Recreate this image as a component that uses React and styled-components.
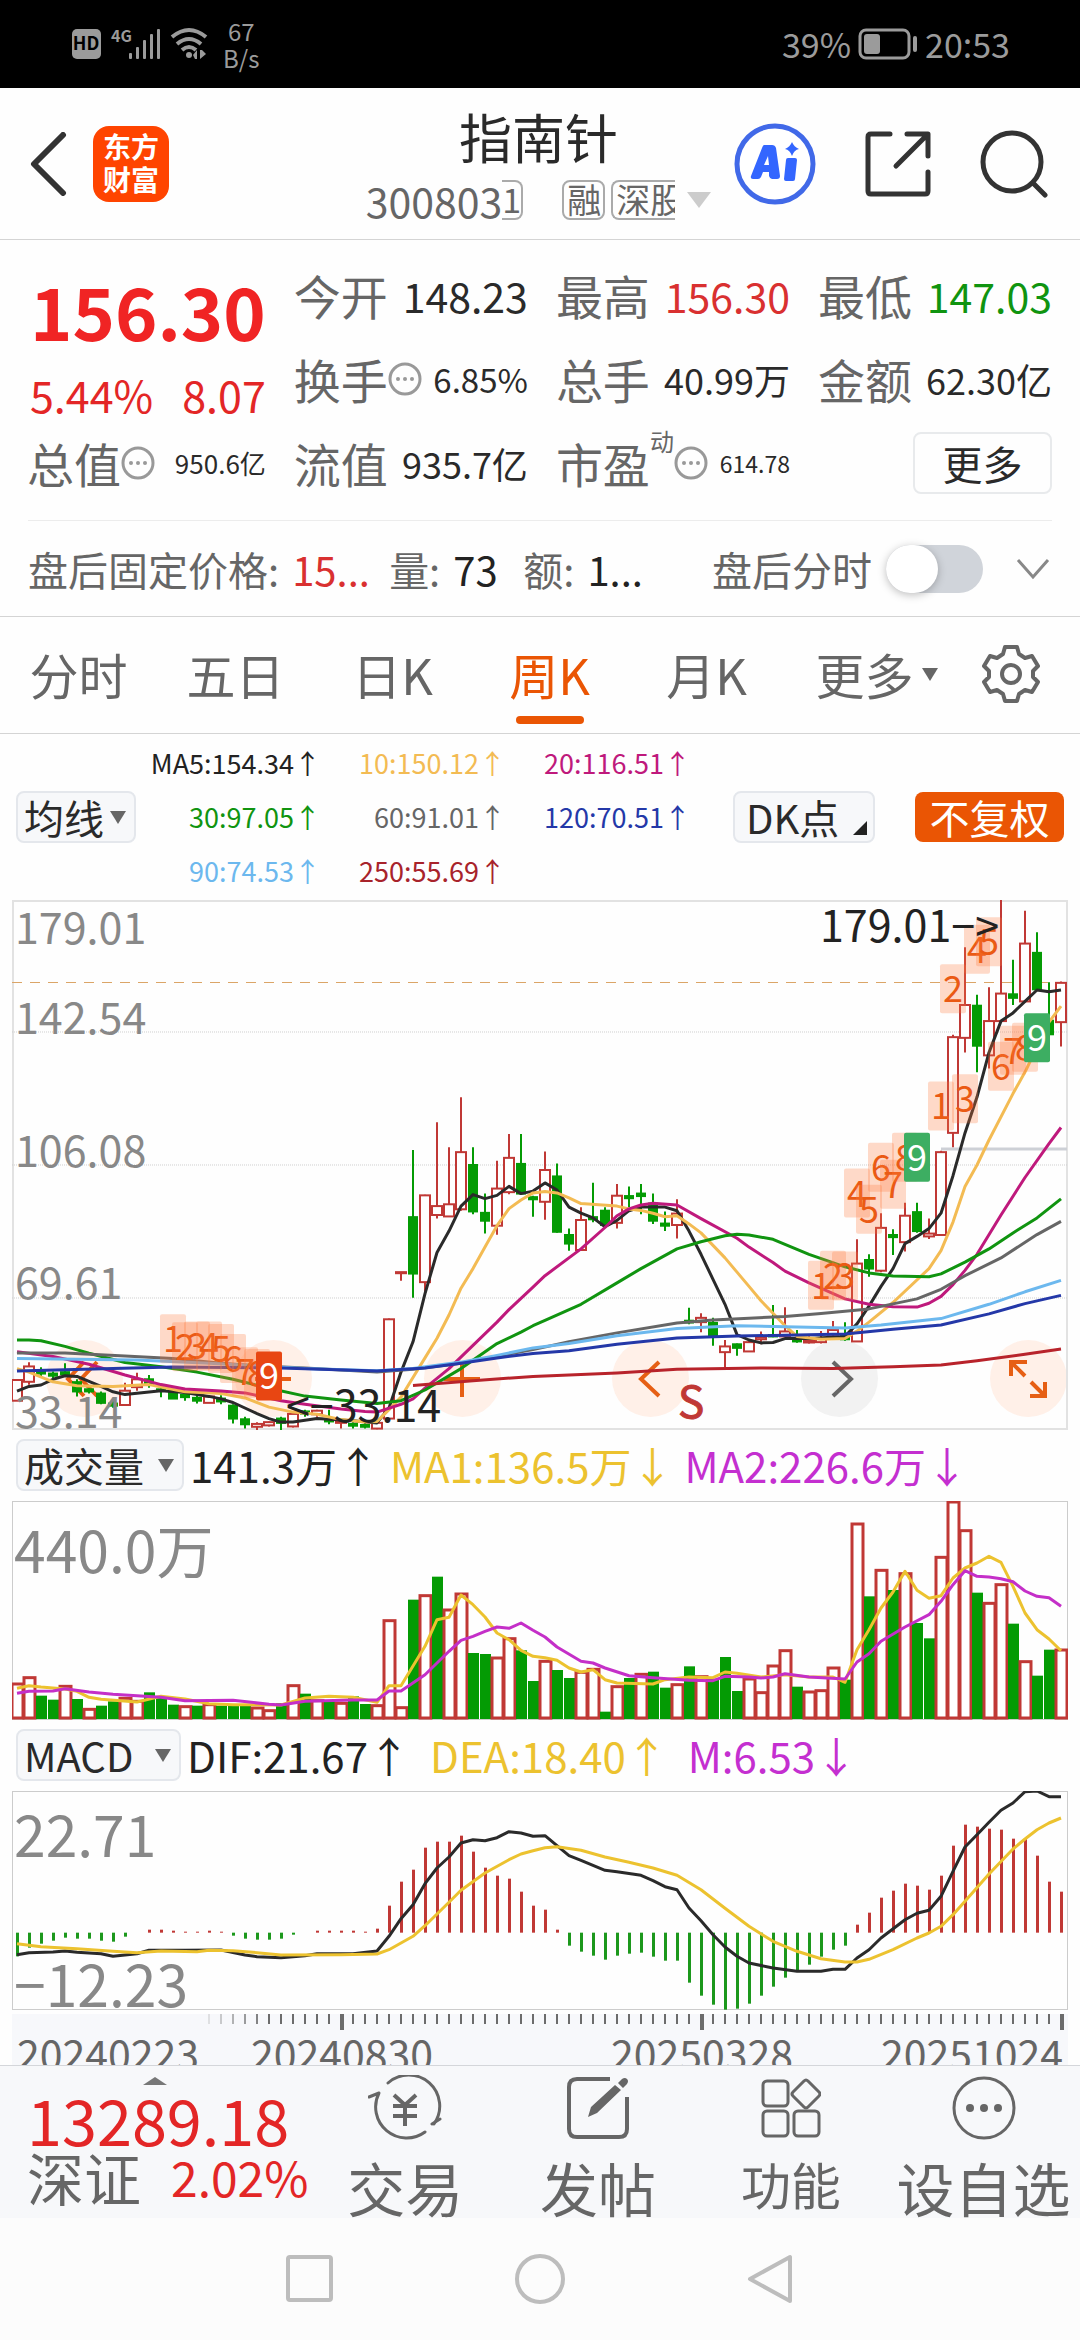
import React, { useState } from "react";
import styled, { createGlobalStyle } from "styled-components";

const GlobalStyle = createGlobalStyle`
  * {
    box-sizing: border-box;
  }
  body {
    margin: 0;
    background: #fcfcfc;
    font-family: "Noto Sans CJK SC", "Noto Sans", sans-serif;
    color: #2a2a2a;
  }
  button,
  select {
    font: inherit;
    color: inherit;
    background: none;
    border: 0;
    padding: 0;
    margin: 0;
    appearance: none;
    white-space: nowrap;
  }
`;

const Page = styled.div`
  background: #fefefe;
  overflow: hidden;
`;

/* ---------- status bar ---------- */

const StatusBar = styled.div`
  display: flex;
  align-items: center;
  justify-content: space-between;
  height: 88px;
  padding: 0 70px;
  background: #000;
  color: #9b9b9b;
  font-size: 34px;
  line-height: 40px;
`;

const StatusGroup = styled.div`
  display: flex;
  align-items: center;
  gap: 7px;
`;

const Speed = styled.div`
  margin-left: 6px;
  text-align: center;
  font-size: 24px;
  line-height: 27px;
`;

/* ---------- header ---------- */

const Header = styled.header`
  display: grid;
  grid-template-columns: 1fr auto 1fr;
  align-items: center;
  height: 152px;
  padding: 0 32px 0 29px;
  border-bottom: 1px solid #d4d4d4;
`;

const HeaderSide = styled.div`
  display: flex;
  align-items: center;
  justify-content: ${(p) => (p.$end ? "flex-end" : "flex-start")};
  gap: ${(p) => (p.$end ? "49px" : "26px")};
  button {
    display: flex;
  }
`;

const Logo = styled.div`
  width: 76px;
  height: 76px;
  padding-top: 4px;
  border-radius: 16px;
  background: #ff4400;
  color: #fff;
  font-size: 28px;
  font-weight: 700;
  line-height: 33px;
  text-align: center;
`;

const Title = styled.h1`
  margin: 0;
  padding-top: 6px;
  font-size: 53px;
  font-weight: 400;
  line-height: 64px;
  text-align: center;
`;

const SubTitle = styled.div`
  display: flex;
  align-items: center;
  height: 62px;
  padding-top: 3px;
  color: #666;
  font-size: 41px;
  line-height: 50px;
`;

const Tag = styled.span`
  height: 40px;
  overflow: hidden;
  border: 2px solid #aaa;
  width: ${(p) => p.$width}px;
  margin-left: ${(p) => p.$gap || 0}px;
  border-width: ${(p) => (p.$cut === "left" ? "2px 2px 2px 0" : p.$cut === "right" ? "2px 0 2px 2px" : "2px")};
  border-radius: ${(p) => (p.$cut === "left" ? "0 8px 8px 0" : p.$cut === "right" ? "8px 0 0 8px" : "8px")};
  padding-left: ${(p) => (p.$cut === "left" ? 0 : 3)}px;
  font-size: 34px;
  line-height: 34px;
  white-space: nowrap;
`;

const Caret = styled.span`
  flex: none;
  width: 0;
  height: 0;
  border: solid transparent;
  border-width: ${(p) => p.$h || 13}px ${(p) => p.$w || 8}px 0;
  border-top-color: ${(p) => p.$color || "#666"};
  margin-left: ${(p) => p.$gap || 0}px;
  pointer-events: none;
`;

/* ---------- quote ---------- */

const Quote = styled.section`
  display: grid;
  grid-template-columns: repeat(4, 1fr);
  grid-auto-rows: 84px;
  column-gap: 31px;
  margin: 0 28px;
  padding: 13px 0 15px 2px;
  border-bottom: 1px solid #ececec;
`;

const PriceBlock = styled.div`
  grid-row: span 2;
  color: #e32626;
`;

const Price = styled.div`
  color: #f02424;
  font-size: 72px;
  font-weight: 700;
  line-height: 114px;
  text-align: center;
`;

const Change = styled.div`
  display: flex;
  justify-content: space-between;
  font-size: 43px;
  line-height: 54px;
`;

const Stat = styled.div`
  display: flex;
  align-items: center;
  white-space: nowrap;
`;

const StatLabel = styled.span`
  margin-left: -3px;
  color: #666;
  font-size: 47px;
  line-height: 60px;
`;

const StatSup = styled.sup`
  align-self: flex-start;
  padding-top: 6px;
  color: #666;
  font-size: 24px;
  line-height: 28px;
`;

const StatValue = styled.span`
  margin-left: auto;
  color: ${(p) => p.$color || "#2a2a2a"};
  font-size: ${(p) => p.$size || 41}px;
  line-height: 60px;
`;

const MoreButton = styled.button`
  justify-self: end;
  align-self: center;
  width: 139px;
  height: 62px;
  border: 2px solid #e8eaec;
  border-radius: 8px;
  font-size: 40px;
  line-height: 56px;
`;

const AfterHours = styled.section`
  display: flex;
  align-items: center;
  height: 96px;
  padding: 0 28px;
  border-bottom: 1px solid #d4d4d4;
  color: #666;
  font-size: 40px;
  line-height: 60px;
  white-space: nowrap;
`;

const AfterValue = styled.span`
  width: ${(p) => p.$width}px;
  margin-left: 13px;
  color: ${(p) => p.$color || "#222"};
`;

const SwitchLabel = styled.label`
  display: flex;
  align-items: center;
  margin-left: auto;
  gap: 14px;
`;

const Switch = styled.input`
  appearance: none;
  display: flex;
  align-items: center;
  width: 97px;
  height: 48px;
  margin: 0;
  border-radius: 24px;
  background: #d0d4da;
  &::before {
    content: "";
    width: 52px;
    height: 48px;
    border-radius: 26px;
    background: #fff;
    box-shadow: 0 2px 8px rgba(0, 0, 0, 0.25);
  }
  &:checked {
    justify-content: flex-end;
    background: #ea5504;
  }
`;

const Expand = styled.button`
  display: flex;
  margin: 0 2px 0 33px;
`;

/* ---------- tabs ---------- */

const Tabs = styled.nav`
  display: grid;
  grid-template-columns: repeat(6, 1fr) 138px;
  height: 117px;
  border-bottom: 1px solid #d4d4d4;
`;

const Tab = styled.button`
  display: flex;
  align-items: center;
  justify-content: center;
  position: relative;
  padding: 0 0 2px ${(p) => (p.$menu ? 26 : 0)}px;
  color: ${(p) => (p.$active ? "#ea5504" : "#666")};
  font-size: 49px;
  line-height: 60px;
  &::after {
    content: "";
    display: ${(p) => (p.$active ? "block" : "none")};
    position: absolute;
    bottom: 9px;
    width: 68px;
    height: 8px;
    border-radius: 4px;
    background: #ea5504;
  }
`;

/* ---------- indicators ---------- */

const Indicators = styled.section`
  display: flex;
  align-items: center;
  height: 166px;
  padding: 0 16px;
`;

const Picker = styled.div`
  display: flex;
  align-items: center;
  width: ${(p) => p.$width}px;
  height: 52px;
  padding: 0 8px 0 6px;
  border: 2px solid #e4e7ec;
  border-radius: 8px;
  background: #f7f8fa;
  select {
    flex: 1;
    min-width: 0;
    height: 48px;
    font-size: 40px;
    line-height: 46px;
  }
`;

const MaGrid = styled.div`
  display: grid;
  grid-template-columns: repeat(3, 185px);
  grid-auto-rows: 54px;
  text-align: right;
  font-size: 27px;
  line-height: 54px;
  white-space: nowrap;
`;

const Colored = styled.span`
  color: ${(p) => p.$color};
`;

const DkButton = styled.button`
  display: flex;
  align-items: center;
  justify-content: space-between;
  width: 142px;
  height: 52px;
  margin: 0 40px 0 auto;
  padding: 0 6px 0 11px;
  border: 2px solid #e4e7ec;
  border-radius: 8px;
  background: #f7f8fa;
  font-size: 40px;
  line-height: 46px;
  &::after {
    content: "";
    align-self: flex-end;
    margin-bottom: 6px;
    border: 7px solid #222;
    border-top-color: transparent;
    border-left-color: transparent;
  }
`;

const AdjustButton = styled.button`
  width: 149px;
  height: 50px;
  border-radius: 8px;
  background: #ea5504;
  color: #fff;
  font-size: 40px;
  line-height: 48px;
`;

/* ---------- charts ---------- */

const ChartWrap = styled.div`
  position: relative;
  margin: 0 12px;
  > svg {
    display: block;
    position: relative;
    width: 100%;
    height: auto;
    pointer-events: none;
  }
`;

const ChartTools = styled.div`
  position: absolute;
  left: 34px;
  right: 1px;
  bottom: 13px;
  display: flex;
  justify-content: space-between;
`;

const Tool = styled.button`
  display: flex;
  align-items: center;
  justify-content: center;
  width: 77px;
  height: 77px;
  border-radius: 50%;
  background: ${(p) => (p.$off ? "#f2f2f2" : "#fff0e8")};
  svg {
    width: 46px;
    height: 46px;
  }
`;

const ChartHead = styled.div`
  display: flex;
  align-items: center;
  gap: ${(p) => p.$gap}px;
  height: 71px;
  padding: 0 0 1px 16px;
  font-size: 42px;
  line-height: 58px;
  white-space: nowrap;
  > :nth-child(2) {
    margin-left: ${(p) => 6 - p.$gap}px;
  }
`;

const AxisWrap = styled(ChartWrap)`
  margin-top: 4px;
  background: #f7f8fb;
`;

/* ---------- bottom bar ---------- */

const BottomBar = styled.footer`
  display: grid;
  grid-template-columns: 309px repeat(4, 1fr);
  height: 153px;
  overflow: hidden;
  border-top: 1px solid #d4d6da;
  background: #f7f8fa;
  color: #666;
`;

const IndexCard = styled.div`
  padding-left: 27px;
  white-space: nowrap;
`;

const IndexCaret = styled(Caret)`
  display: block;
  width: 24px;
  margin: 11px 0 0 116px;
  border-width: 0 12px 8px;
  border-bottom-color: #777;
`;

const IndexValue = styled.div`
  color: #e32626;
  font-size: 63px;
  line-height: 68px;
`;

const IndexRow = styled.div`
  display: flex;
  align-items: center;
  gap: 30px;
  font-size: 57px;
  line-height: 46px;
`;

const IndexChange = styled.span`
  color: #e32626;
  font-size: 48px;
`;

const Action = styled.button`
  display: flex;
  flex-direction: column;
  align-items: center;
  padding-top: 9px;
  font-size: ${(p) => p.$size || 58}px;
  line-height: ${(p) => (p.$size ? 68 : 76)}px;
  svg {
    flex: none;
    margin-bottom: 8px;
  }
`;

const NavBar = styled.div`
  display: flex;
  align-items: center;
  justify-content: center;
  gap: 178px;
  height: 122px;
  background: #fcfcfc;
`;

/* ---------- data ---------- */

// one row per week: [up, high, body top, body bottom, low]
const candles = [
  [1, 1370, 1372, 1430, 1430], [1, 1322, 1334, 1377, 1385], [0, 1336, 1346, 1354, 1365],
  [0, 1348, 1354, 1360, 1368], [0, 1325, 1350, 1356, 1362], [0, 1370, 1378, 1404, 1418],
  [0, 1395, 1398, 1404, 1410], [0, 1404, 1410, 1436, 1440], [0, 1425, 1438, 1444, 1450],
  [1, 1380, 1402, 1442, 1442], [1, 1352, 1370, 1392, 1402], [0, 1358, 1370, 1384, 1394],
  [0, 1385, 1398, 1402, 1420], [0, 1400, 1403, 1424, 1424], [0, 1408, 1414, 1420, 1430],
  [0, 1415, 1422, 1430, 1438], [1, 1415, 1418, 1436, 1436], [0, 1415, 1424, 1432, 1440],
  [0, 1440, 1444, 1480, 1494], [0, 1475, 1482, 1496, 1508], [1, 1490, 1495, 1503, 1512],
  [1, 1488, 1490, 1499, 1502], [0, 1475, 1480, 1492, 1512], [1, 1462, 1467, 1502, 1505],
  [0, 1455, 1460, 1466, 1475], [1, 1455, 1458, 1468, 1475], [0, 1455, 1482, 1488, 1496],
  [1, 1480, 1488, 1492, 1508], [0, 1490, 1495, 1500, 1508], [0, 1490, 1498, 1503, 1508],
  [1, 1490, 1492, 1508, 1510], [1, 1200, 1202, 1480, 1484], [1, 1070, 1070, 1073, 1094],
  [0, 728, 916, 1074, 1142], [1, 853, 855, 1098, 1125], [1, 650, 885, 910, 920],
  [1, 720, 880, 914, 914], [1, 580, 734, 894, 898], [0, 720, 770, 900, 908],
  [0, 850, 904, 926, 962], [1, 758, 836, 940, 965], [1, 683, 750, 846, 852],
  [0, 683, 767, 850, 852], [0, 856, 860, 866, 915], [1, 732, 784, 873, 923],
  [0, 766, 802, 957, 960], [0, 948, 966, 990, 1010], [1, 888, 924, 1008, 1008],
  [0, 820, 916, 922, 930], [0, 888, 898, 938, 945], [1, 823, 856, 932, 948],
  [0, 830, 857, 863, 888], [0, 823, 850, 857, 908], [0, 850, 878, 926, 935],
  [0, 900, 934, 940, 955], [1, 866, 906, 938, 976], [0, 1170, 1206, 1211, 1216],
  [1, 1185, 1198, 1210, 1238], [0, 1198, 1212, 1250, 1276], [1, 1260, 1278, 1294, 1336],
  [0, 1270, 1272, 1282, 1304], [1, 1262, 1266, 1292, 1292], [1, 1236, 1252, 1258, 1272],
  [0, 1162, 1246, 1250, 1252], [1, 1168, 1236, 1250, 1252], [0, 1232, 1258, 1264, 1268],
  [1, 1245, 1262, 1267, 1270], [1, 1235, 1256, 1266, 1270], [1, 1207, 1232, 1245, 1250],
  [0, 1210, 1245, 1258, 1262], [1, 978, 1046, 1264, 1264], [0, 1020, 1036, 1060, 1083],
  [1, 905, 946, 1066, 1070], [0, 950, 966, 972, 1022], [1, 876, 912, 986, 1012],
  [0, 876, 902, 955, 960], [1, 920, 962, 970, 977], [1, 730, 734, 966, 968],
  [1, 405, 412, 680, 720], [1, 160, 322, 414, 455], [0, 293, 324, 436, 510],
  [1, 272, 367, 463, 500], [1, 28, 290, 367, 370], [0, 195, 292, 302, 322],
  [1, 58, 150, 312, 314], [0, 118, 176, 278, 280], [0, 258, 366, 404, 406],
  [1, 256, 260, 370, 438],
];

const priceLines = [
  { color: "#2a2a2a", points: [[0, 1403], [1, 1390], [2, 1386], [3, 1370], [4, 1360], [5, 1362], [7, 1390], [8, 1405], [9, 1413], [12, 1402], [14, 1407], [16, 1418], [17, 1425], [18, 1435], [20, 1466], [21, 1480], [22, 1490], [23, 1490], [25, 1480], [28, 1486], [30, 1492], [31, 1450], [32, 1350], [33, 1265], [34, 1130], [35, 1015], [36, 955], [37, 885], [38, 853], [39, 864], [40, 855], [41, 830], [42, 850], [43, 843], [44, 820], [45, 840], [46, 888], [47, 905], [48, 918], [49, 943], [50, 925], [51, 898], [52, 888], [54, 888], [55, 898], [56, 955], [57, 1020], [58, 1090], [59, 1160], [60, 1245], [61, 1260], [62, 1268], [63, 1267], [64, 1256], [66, 1256], [69, 1250], [70, 1215], [71, 1165], [72, 1110], [73, 1060], [74, 990], [75, 970], [76, 948], [77, 905], [78, 800], [79, 680], [80, 580], [81, 455], [82, 367], [83, 344], [84, 312], [85, 280], [86, 285], [87, 280]] },
  { color: "#f3bb53", points: [[0, 1340], [1, 1350], [3, 1377], [5, 1388], [8, 1390], [11, 1385], [14, 1405], [17, 1410], [19, 1422], [21, 1448], [23, 1462], [25, 1468], [27, 1483], [29, 1490], [30, 1488], [31, 1455], [32, 1420], [33, 1365], [34, 1310], [35, 1255], [36, 1190], [37, 1115], [38, 1060], [39, 1000], [40, 940], [41, 892], [42, 868], [43, 848], [44, 844], [45, 848], [46, 862], [47, 878], [50, 885], [51, 893], [52, 897], [53, 905], [54, 915], [55, 912], [56, 935], [57, 960], [59, 1030], [60, 1070], [61, 1110], [62, 1150], [63, 1185], [64, 1220], [65, 1250], [67, 1258], [69, 1256], [70, 1235], [71, 1210], [73, 1155], [76, 1060], [77, 1010], [78, 930], [79, 830], [80, 770], [81, 700], [83, 570], [84, 510], [85, 440], [86, 370], [87, 325]] },
  { color: "#bf197c", points: [[0, 1293], [3, 1306], [6, 1328], [9, 1358], [12, 1385], [14, 1397], [17, 1403], [19, 1408], [22, 1430], [24, 1440], [27, 1453], [29, 1460], [30, 1462], [32, 1440], [33, 1425], [34, 1395], [36, 1340], [38, 1275], [40, 1210], [41, 1175], [43, 1112], [44, 1080], [47, 1005], [49, 945], [50, 912], [51, 893], [52, 882], [53, 877], [55, 882], [57, 920], [60, 975], [61, 1000], [63, 1043], [64, 1067], [66, 1100], [69, 1145], [71, 1160], [73, 1167], [75, 1168], [76, 1157], [77, 1138], [78, 1105], [79, 1065], [80, 1020], [82, 910], [84, 805], [86, 710], [87, 665]] },
  { color: "#109410", points: [[0, 1260], [1, 1260], [2, 1262], [4, 1278], [6, 1297], [9, 1323], [12, 1335], [15, 1350], [18, 1370], [21, 1395], [24, 1417], [27, 1428], [30, 1438], [32, 1430], [34, 1400], [37, 1340], [40, 1270], [42, 1238], [43, 1220], [44, 1205], [47, 1160], [50, 1100], [52, 1060], [55, 1005], [57, 985], [59, 968], [60, 964], [61, 966], [63, 978], [66, 1020], [69, 1055], [71, 1072], [73, 1081], [76, 1083], [77, 1075], [79, 1042], [81, 1005], [83, 960], [85, 918], [87, 865]] },
  { color: "#666666", points: [[0, 1296], [4, 1296], [9, 1305], [13, 1312], [17, 1325], [20, 1332], [24, 1338], [30, 1350], [33, 1342], [37, 1325], [40, 1305], [43, 1287], [46, 1265], [50, 1240], [55, 1212], [58, 1204], [61, 1199], [64, 1194], [67, 1186], [71, 1173], [75, 1145], [77, 1118], [79, 1080], [82, 1030], [85, 965], [87, 928]] },
  { color: "#6cb8ee", points: [[0, 1312], [10, 1316], [16, 1325], [24, 1340], [30, 1346], [33, 1340], [37, 1322], [40, 1303], [43, 1282], [46, 1270], [50, 1248], [55, 1228], [60, 1220], [65, 1224], [69, 1226], [72, 1218], [77, 1200], [81, 1160], [84, 1125], [87, 1093]] },
  { color: "#2438a8", points: [[0, 1347], [8, 1340], [13, 1336], [22, 1338], [30, 1347], [34, 1338], [37, 1325], [40, 1310], [43, 1298], [46, 1290], [50, 1272], [55, 1254], [60, 1249], [65, 1246], [69, 1243], [73, 1230], [77, 1218], [81, 1187], [84, 1158], [87, 1135]] },
  { color: "#b8232b", points: [[33, 1387], [38, 1374], [43, 1362], [50, 1352], [55, 1342], [62, 1338], [68, 1340], [73, 1335], [77, 1330], [80, 1318], [84, 1300], [87, 1285]] },
];

// nine-turn counters: [week, top, number, solid colour]
const turns = [
  [13, 1188, 1], [14, 1210, 2], [15, 1208, 3], [16, 1208, 4], [17, 1215, 5], [18, 1243, 6],
  [19, 1280, 7], [20, 1285, 8], [21, 1292, 9, "#e84612"],
  [67, 1038, 1], [68, 1010, 2], [69, 1012, 3], [70, 780, 4], [71, 825, 5], [72, 708, 6],
  [73, 755, 7], [74, 680, 8], [75, 680, 9, "#3dae62"],
  [77, 536, 1], [78, 208, 2], [79, 516, 3], [80, 97, 4], [81, 76, 5], [82, 425, 6],
  [83, 380, 7], [84, 372, 8], [85, 345, 9, "#3dae62"],
];

const volumes = [
  760, 741, 798, 810, 767, 808, 836, 828, 815, 803, 812, 788, 805, 825, 828, 828, 822, 828, 828, 828,
  832, 840, 820, 765, 792, 810, 815, 818, 800, 823, 825, 570, 831, 510, 495, 441, 538, 490, 670, 673,
  682, 624, 662, 754, 692, 721, 745, 725, 716, 846, 768, 745, 731, 726, 774, 762, 710, 738, 748, 682,
  784, 745, 786, 706, 660, 771, 784, 780, 712, 750, 280, 500, 419, 481, 429, 580, 626, 380, 214, 300,
  489, 518, 462, 582, 693, 738, 660, 658,
];

const upWeeks = new Set([
  0, 1, 4, 6, 9, 10, 14, 16, 20, 21, 23, 25, 27, 30, 31, 32, 34, 36, 37, 40, 41, 44, 47, 48, 50, 52, 55,
  57, 61, 62, 63, 64, 66, 67, 68, 70, 72, 74, 77, 78, 79, 81, 82, 84, 87,
]);

const volumeLines = [
  { color: "#ecc22f", points: [[0, 776], [1, 768], [2, 772], [4, 778], [5, 785], [6, 803], [7, 809], [10, 817], [12, 800], [14, 808], [16, 822], [18, 825], [20, 825], [22, 826], [24, 805], [26, 800], [28, 803], [30, 818], [31, 768], [32, 768], [34, 650], [35, 570], [36, 563], [37, 496], [38, 525], [39, 562], [40, 610], [41, 630], [42, 662], [43, 680], [44, 684], [45, 692], [46, 715], [47, 727], [48, 720], [49, 750], [50, 760], [53, 763], [54, 750], [56, 742], [58, 744], [59, 727], [60, 731], [62, 742], [64, 735], [66, 742], [68, 742], [69, 758], [70, 660], [71, 600], [72, 535], [73, 487], [74, 425], [75, 482], [76, 506], [77, 498], [78, 445], [79, 415], [80, 400], [81, 380], [82, 398], [83, 470], [84, 550], [85, 600], [86, 628], [87, 663]] },
  { color: "#c42fc8", points: [[0, 791], [1, 785], [3, 784], [4, 777], [6, 787], [8, 794], [12, 803], [14, 813], [18, 812], [21, 824], [22, 826], [24, 815], [28, 811], [30, 811], [31, 784], [32, 784], [34, 735], [36, 665], [37, 632], [38, 620], [39, 605], [40, 592], [41, 596], [42, 580], [43, 602], [44, 622], [45, 652], [47, 695], [48, 700], [49, 715], [51, 738], [53, 744], [56, 752], [58, 753], [59, 740], [61, 742], [62, 745], [63, 742], [64, 732], [66, 742], [69, 748], [70, 697], [71, 672], [72, 635], [74, 592], [76, 555], [77, 515], [78, 465], [79, 423], [80, 440], [81, 442], [82, 447], [83, 456], [84, 484], [85, 500], [86, 504], [87, 530]] },
];

const macdZero = 639;
const macdBars = [
  710, 684, 672, 663, 654, 657, 657, 663, 666, 651, 639, 630, 630, 633, 636, 636, 633, 636, 648, 657,
  660, 660, 657, 645, 639, 633, 633, 633, 633, 636, 627, 558, 486, 450, 384, 366, 366, 348, 396, 444,
  468, 477, 516, 558, 570, 630, 678, 696, 708, 720, 708, 702, 699, 711, 723, 723, 789, 828, 855, 870,
  867, 852, 828, 801, 774, 756, 735, 711, 690, 678, 615, 579, 534, 513, 492, 498, 510, 468, 378, 315,
  321, 327, 330, 357, 357, 408, 486, 516,
];

const macdLines = [
  { color: "#2a2a2a", points: [[0, 705], [1, 699], [3, 697], [4, 694], [5, 698], [7, 702], [8, 710], [10, 702], [11, 692], [14, 692], [17, 691], [19, 706], [20, 711], [22, 714], [24, 708], [25, 702], [28, 702], [30, 694], [31, 650], [32, 597], [33, 555], [34, 492], [35, 445], [36, 412], [37, 370], [38, 360], [39, 363], [40, 354], [41, 336], [42, 340], [43, 350], [44, 348], [45, 378], [46, 408], [47, 422], [49, 452], [50, 456], [52, 467], [53, 483], [54, 501], [55, 510], [56, 565], [57, 603], [58, 645], [59, 682], [60, 710], [61, 730], [63, 745], [65, 755], [67, 755], [68, 749], [69, 749], [70, 715], [71, 690], [72, 655], [74, 600], [75, 581], [76, 572], [77, 530], [78, 455], [79, 382], [80, 345], [81, 308], [82, 272], [83, 250], [84, 216], [85, 214], [86, 231], [87, 231]] },
  { color: "#ecc22f", points: [[0, 672], [2, 681], [5, 687], [8, 695], [10, 699], [12, 694], [15, 696], [16, 692], [18, 693], [20, 699], [22, 706], [27, 705], [30, 703], [31, 690], [33, 650], [34, 618], [36, 548], [37, 512], [39, 460], [41, 420], [42, 403], [43, 393], [44, 384], [45, 381], [47, 392], [49, 412], [51, 428], [53, 445], [55, 467], [57, 510], [59, 566], [61, 620], [63, 665], [65, 695], [67, 717], [69, 727], [70, 727], [71, 719], [73, 690], [75, 655], [76, 640], [77, 620], [78, 585], [79, 545], [81, 463], [83, 388], [84, 358], [85, 330], [86, 310], [87, 295]] },
];

const RED = "#c03835";
const GREEN = "#049b04";

const xAt = (i) => 5 + i * 12;
const priceY = (v) => (v - 28) / 2.8;
const subY = (v) => (v - 214) / 3;
const toPoints = (points, y) => points.map(([i, v]) => `${xAt(i)},${y(v).toFixed(1)}`).join(" ");

const Lines = ({ lines, y }) =>
  lines.map((line) => (
    <polyline
      key={line.color}
      points={toPoints(line.points, y)}
      fill="none"
      stroke={line.color}
      strokeWidth="3"
      strokeLinejoin="round"
    />
  ));

const PriceChart = () => (
  <svg viewBox="0 0 1056 530">
    <rect x="1" y="1" width="1054" height="528" fill="none" stroke="#e2e2e2" strokeWidth="2" />
    {[132, 265, 398].map((y) => (
      <line key={y} x1="0" x2="1055" y1={y} y2={y} stroke="#cfcfcf" strokeDasharray="1 1" />
    ))}
    <line x1="0" x2="1055" y1="82.5" y2="82.5" stroke="#dba567" strokeDasharray="10 8" />
    <line x1="929" x2="1055" y1="249" y2="249" stroke="#cdd0d6" strokeWidth="3" />
    {candles.map(([up, high, top, bottom, low], i) => (
      <g key={i} stroke={up ? RED : GREEN} strokeWidth="2" fill={up ? "#fff" : GREEN}>
        <line x1={xAt(i)} x2={xAt(i)} y1={priceY(high)} y2={priceY(top)} />
        <line x1={xAt(i)} x2={xAt(i)} y1={priceY(bottom)} y2={priceY(low)} />
        <rect
          x={xAt(i) - (up ? 5 : 4)}
          y={priceY(top)}
          width={up ? 10 : 8}
          height={Math.max(1, (bottom - top) / 2.8)}
        />
      </g>
    ))}
    <g fontSize="43" fill="#888">
      <text x="3" y="44">179.01</text>
      <text x="3" y="134">142.54</text>
      <text x="3" y="267">106.08</text>
      <text x="3" y="399">69.61</text>
      <text x="3" y="528">33.14</text>
    </g>
    <Lines lines={priceLines} y={priceY} />
    {turns.map(([i, top, n, solid]) => (
      <g key={i}>
        <rect
          x={xAt(i) - 13}
          y={priceY(top)}
          width="26"
          height="49"
          rx="2"
          fill={solid || "#ff7a3c"}
          fillOpacity={solid ? 1 : 0.28}
        />
        <text
          x={xAt(i)}
          y={priceY(top) + 38}
          fontSize="36"
          textAnchor="middle"
          fill={solid ? "#fff" : "#ea5a14"}
        >
          {n}
        </text>
      </g>
    ))}
    <g fontSize="43" fill="#222">
      <text x="987" y="42" textAnchor="end">179.01−&gt;</text>
      <text x="274" y="522">&lt;−33.14</text>
    </g>
    <text x="666" y="518" fontSize="44" fill={RED} stroke={RED}>
      S
    </text>
  </svg>
);

const VolumeChart = () => (
  <svg viewBox="0 0 1056 219">
    <rect x="0.5" y="0.5" width="1055" height="218" fill="none" stroke="#ccc" />
    <text x="2" y="72" fontSize="57" fill="#888">440.0万</text>
    {volumes.map((v, i) => {
      const top = subY(v);
      return upWeeks.has(i) ? (
        <rect key={i} x={xAt(i) - 5} y={top + 1} width="11" height={216 - top} fill="#fff" stroke={RED} strokeWidth="3" />
      ) : (
        <rect key={i} x={xAt(i) - 5} y={top} width="11" height={218 - top} fill={GREEN} />
      );
    })}
    <Lines lines={volumeLines} y={subY} />
  </svg>
);

const MacdChart = () => (
  <svg viewBox="0 0 1056 219">
    <rect x="0.5" y="0.5" width="1055" height="218" fill="none" stroke="#ccc" />
    {macdBars.map((v, i) => (
      <rect
        key={i}
        x={xAt(i) - 1}
        y={subY(Math.min(v, macdZero))}
        width="3"
        height={Math.abs(v - macdZero) / 3}
        fill={v < macdZero ? RED : "#1c981c"}
      />
    ))}
    <g fontSize="57" fill="#888">
      <text x="2" y="66">22.71</text>
      <text x="2" y="216">−12.23</text>
    </g>
    <Lines lines={macdLines} y={subY} />
  </svg>
);

const Axis = () => (
  <svg viewBox="0 0 1056 51">
    {macdBars.map((_, i) => {
      if (i < 16) return null;
      const major = i % 30 === 27;
      return (
        <rect
          key={i}
          x={xAt(i) - 1}
          width={major ? 4 : 2}
          height={major ? 16 : 10}
          fill="#6c6c6c"
          opacity={Math.min(1, (i - 15) / 6)}
        />
      );
    })}
    <g fontSize="41" fill="#666">
      <text x="5" y="56">20240223</text>
      <text x="239" y="56">20240830</text>
      <text x="599" y="56">20250328</text>
      <text x="1051" y="56" textAnchor="end">20251024</text>
    </g>
  </svg>
);

/* ---------- icons ---------- */

const StatusIcons = () => (
  <svg width="140" height="34" viewBox="0 0 140 34" fill="#9b9b9b">
    <rect x="2" y="2" width="29" height="30" rx="5" />
    <text x="16" y="23" fontSize="18" fontWeight="700" textAnchor="middle" fill="#000">HD</text>
    <text x="41" y="15" fontSize="16" fontWeight="700">4G</text>
    <rect x="59" y="26" width="3" height="6" rx="1" />
    <rect x="66" y="20" width="3" height="12" rx="1" />
    <rect x="73" y="13" width="3" height="19" rx="1" />
    <rect x="80" y="7" width="3" height="25" rx="1" />
    <rect x="87" y="2" width="3" height="30" rx="1" />
    <g fill="none" stroke="#9b9b9b" strokeWidth="4">
      <path d="M102 10q17-14 34 0" />
      <path d="M107 17q12-10 24 0" />
      <path d="M112 23q7-6 14 0" />
    </g>
    <circle cx="119" cy="28" r="3" />
    <path d="M127 23v9h-2l-2-4zM130 32v-9h2l4 4z" />
  </svg>
);

const Battery = () => (
  <svg width="60" height="32" viewBox="0 0 60 32">
    <rect x="2" y="2" width="49" height="28" rx="6" fill="none" stroke="#9b9b9b" strokeWidth="3" />
    <rect x="6" y="6" width="16" height="20" rx="3" fill="#9b9b9b" />
    <rect x="55" y="8" width="4" height="16" rx="2" fill="#9b9b9b" />
  </svg>
);

const BackIcon = () => (
  <svg width="38" height="64" viewBox="0 0 38 64" fill="none" stroke="#333" strokeWidth="6">
    <path d="M34 3L5 32l29 29" strokeLinecap="round" strokeLinejoin="round" />
  </svg>
);

const AiIcon = () => (
  <svg width="82" height="82" viewBox="0 0 82 82">
    <circle cx="41" cy="41" r="38" fill="#fff" stroke="#4169e8" strokeWidth="5" />
    <g fill="#3366ff">
      <path
        fillRule="evenodd"
        d="M30 22h8q3 0 4 3l4 28q0 3-3 3h-5q-2 0-3-3v-4h-6l-2 5q-1 2-3 2h-5q-3 0-2-3l11-28q1-3 2-3zM34 33l-4 9h5z"
      />
      <path d="M54 35h7q2 0 2 2l-2 19q0 2-2 2h-7q-2 0-2-2l2-19q0-2 2-2z" />
      <path d="M58 19q2 5 7 7q-5 1-7 7q-2-6-7-7q5-2 7-7z" />
    </g>
  </svg>
);

const ShareIcon = () => (
  <svg width="66" height="66" viewBox="0 0 66 66" fill="none" stroke="#333" strokeWidth="5" strokeLinecap="round" strokeLinejoin="round">
    <path d="M25 3H6q-3 0-3 3v54q0 3 3 3h54q3 0 3-3V41M42 3h21v22M62 4L31 35" />
  </svg>
);

const SearchIcon = () => (
  <svg width="68" height="68" viewBox="0 0 68 68" fill="none" stroke="#333" strokeWidth="5" strokeLinecap="round">
    <circle cx="32" cy="32" r="29" />
    <path d="M53 53l12 12" />
  </svg>
);

const InfoIcon = () => (
  <svg width="34" height="34" viewBox="0 0 34 34">
    <circle cx="17" cy="17" r="15" fill="none" stroke="#999" strokeWidth="3" />
    <g fill="#999">
      <circle cx="10" cy="17" r="2" />
      <circle cx="17" cy="17" r="2" />
      <circle cx="24" cy="17" r="2" />
    </g>
  </svg>
);

const ChevronIcon = () => (
  <svg width="34" height="22" viewBox="0 0 34 22" fill="none" stroke="#888" strokeWidth="3">
    <path d="M2 2l15 17L32 2" />
  </svg>
);

const GearIcon = () => (
  <svg width="58" height="60" viewBox="0 0 58 60" fill="none" stroke="#666" strokeWidth="4" strokeLinejoin="round">
    <path d="M23 3h12l2 7 6 4 7-2 6 10-5 5v6l5 5-6 10-7-2-6 4-2 7H23l-2-7-6-4-7 2L2 38l5-5v-6l-5-5L8 12l7 2 6-4z" />
    <circle cx="29" cy="30" r="9" />
  </svg>
);

const toolIcons = [
  { name: "快退", path: "M22 6L6 23l16 17M35 6L19 23l16 17" },
  { name: "缩小", path: "M5 23h36" },
  { name: "放大", path: "M5 23h36M23 5v36" },
  { name: "后退", path: "M31 6L13 23l18 17" },
  { name: "前进", path: "M16 6l18 17-18 17", off: true },
  { name: "全屏", path: "M20 20L6 6M6 20V6h16M26 26l14 14M40 26v14H25" },
];

const TradeIcon = () => (
  <svg width="74" height="66" viewBox="0 0 74 66" fill="none" stroke="#666" strokeWidth="3" strokeLinecap="round" strokeLinejoin="round">
    <path d="M20 8A31 31 0 0 1 66 49" />
    <path d="M64 49l8-5" />
    <path d="M1 22l10-4A31 31 0 0 0 57 57" />
    <path d="M26 20l11 10 11-10M25 31h24M25 41h24M37 31v20" strokeLinecap="butt" strokeWidth="4" />
  </svg>
);

const PostIcon = () => (
  <svg width="62" height="66" viewBox="0 0 62 66" fill="none" stroke="#666" strokeWidth="4">
    <path d="M43 4H10q-8 0-8 8v42q0 8 8 8h42q8 0 8-8V22" />
    <path d="M21 42l3-10 24-22 6 5-24 23zM51 8l4-4q3-2 5 0t0 5l-4 4z" fill="#666" stroke="none" />
  </svg>
);

const GridIcon = () => (
  <svg width="60" height="66" viewBox="0 0 60 66" fill="none" stroke="#666" strokeWidth="3">
    <rect x="2" y="6" width="25" height="25" rx="4" />
    <rect x="2" y="36" width="25" height="25" rx="4" />
    <rect x="33" y="36" width="25" height="25" rx="4" />
    <path d="M43 6q2-2 4 0l11 11q2 2 0 4L47 32q-2 2-4 0L32 21q-2-2 0-4z" />
  </svg>
);

const DotsIcon = () => (
  <svg width="64" height="66" viewBox="0 0 64 66">
    <circle cx="32" cy="33" r="30" fill="none" stroke="#666" strokeWidth="3" />
    <g fill="#666">
      <circle cx="18" cy="33" r="4" />
      <circle cx="32" cy="33" r="4" />
      <circle cx="46" cy="33" r="4" />
    </g>
  </svg>
);

/* ---------- page ---------- */

const topStats = [
  { label: "今开", value: "148.23" },
  { label: "最高", value: "156.30", color: "#d93030" },
  { label: "最低", value: "147.03", color: "#109410" },
  { label: "换手", value: "6.85%", size: 33, info: true },
  { label: "总手", value: "40.99万", size: 36 },
  { label: "金额", value: "62.30亿", size: 36 },
  { label: "总值", value: "950.6亿", size: 26, info: true },
  { label: "流值", value: "935.7亿", size: 36 },
  { label: "市盈", sup: "动", value: "614.78", size: 23, info: true },
];

const averages = [
  ["MA5:154.34↑", "#222"],
  ["10:150.12↑", "#f3bb53"],
  ["20:116.51↑", "#bf197c"],
  ["30:97.05↑", "#109410"],
  ["60:91.01↑", "#666"],
  ["120:70.51↑", "#2438a8"],
  ["90:74.53↑", "#6cb8ee"],
  ["250:55.69↑", "#a8232b"],
];

const tabs = ["分时", "五日", "日K", "周K", "月K", "更多"];

const App = () => {
  const [tab, setTab] = useState("周K");
  const [afterHours, setAfterHours] = useState(false);

  return (
    <Page>
      <GlobalStyle />
      <StatusBar>
        <StatusGroup>
          <StatusIcons />
          <Speed>
            67
            <br />
            B/s
          </Speed>
        </StatusGroup>
        <StatusGroup>
          39%
          <Battery />
          20:53
        </StatusGroup>
      </StatusBar>

      <Header>
        <HeaderSide>
          <button aria-label="返回">
            <BackIcon />
          </button>
          <Logo>
            东方
            <br />
            财富
          </Logo>
        </HeaderSide>
        <div>
          <Title>指南针</Title>
          <SubTitle>
            300803
            <Tag $width={21} $cut="left">1</Tag>
            <Tag $width={43} $gap={39}>融</Tag>
            <Tag $width={64} $gap={6} $cut="right">深股</Tag>
            <Caret $w={12} $h={16} $gap={12} $color="#ccc" />
          </SubTitle>
        </div>
        <HeaderSide $end>
          <button aria-label="Ai">
            <AiIcon />
          </button>
          <button aria-label="分享">
            <ShareIcon />
          </button>
          <button aria-label="搜索">
            <SearchIcon />
          </button>
        </HeaderSide>
      </Header>

      <Quote>
        <PriceBlock>
          <Price>156.30</Price>
          <Change>
            <span>5.44%</span>
            <span>8.07</span>
          </Change>
        </PriceBlock>
        {topStats.map((s) => (
          <Stat key={s.label}>
            <StatLabel>{s.label}</StatLabel>
            {s.sup && <StatSup>{s.sup}</StatSup>}
            {s.info && <InfoIcon />}
            <StatValue $color={s.color} $size={s.size}>
              {s.value}
            </StatValue>
          </Stat>
        ))}
        <MoreButton>更多</MoreButton>
      </Quote>

      <AfterHours>
        盘后固定价格:
        <AfterValue $width={97} $color="#d93030">15...</AfterValue>
        <span>量:</span>
        <AfterValue $width={70}>73</AfterValue>
        <span>额:</span>
        <AfterValue $width={60}>1...</AfterValue>
        <SwitchLabel>
          盘后分时
          <Switch
            type="checkbox"
            checked={afterHours}
            onChange={(e) => setAfterHours(e.target.checked)}
          />
        </SwitchLabel>
        <Expand aria-label="展开">
          <ChevronIcon />
        </Expand>
      </AfterHours>

      <Tabs>
        {tabs.map((name) => (
          <Tab key={name} $active={name === tab} $menu={name === "更多"} onClick={() => setTab(name)}>
            {name}
            {name === "更多" && <Caret $gap={8} />}
          </Tab>
        ))}
        <Tab aria-label="设置">
          <GearIcon />
        </Tab>
      </Tabs>

      <Indicators>
        <Picker $width={120}>
          <select aria-label="均线">
            <option>均线</option>
          </select>
          <Caret />
        </Picker>
        <MaGrid>
          {averages.map(([text, color]) => (
            <Colored key={text} $color={color}>
              {text}
            </Colored>
          ))}
        </MaGrid>
        <DkButton>DK点</DkButton>
        <AdjustButton>不复权</AdjustButton>
      </Indicators>

      <ChartWrap>
        <ChartTools>
          {toolIcons.map((t) => (
            <Tool key={t.name} aria-label={t.name} $off={t.off}>
              <svg viewBox="0 0 46 46" fill="none" stroke={t.off ? "#666" : "#e65f14"} strokeWidth="4">
                <path d={t.path} />
              </svg>
            </Tool>
          ))}
        </ChartTools>
        <PriceChart />
      </ChartWrap>

      <ChartHead $gap={11}>
        <Picker $width={168}>
          <select aria-label="副图一">
            <option>成交量</option>
          </select>
          <Caret />
        </Picker>
        <Colored $color="#222">141.3万↑</Colored>
        <Colored $color="#ecc22f">MA1:136.5万↓</Colored>
        <Colored $color="#c42fd0">MA2:226.6万↓</Colored>
      </ChartHead>
      <ChartWrap>
        <VolumeChart />
      </ChartWrap>

      <ChartHead $gap={20}>
        <Picker $width={165}>
          <select aria-label="副图二">
            <option>MACD</option>
          </select>
          <Caret />
        </Picker>
        <Colored $color="#222">DIF:21.67↑</Colored>
        <Colored $color="#ecc22f">DEA:18.40↑</Colored>
        <Colored $color="#c42fd0">M:6.53↓</Colored>
      </ChartHead>
      <ChartWrap>
        <MacdChart />
      </ChartWrap>
      <AxisWrap>
        <Axis />
      </AxisWrap>

      <BottomBar>
        <IndexCard>
          <IndexCaret />
          <IndexValue>13289.18</IndexValue>
          <IndexRow>
            深证
            <IndexChange>2.02%</IndexChange>
          </IndexRow>
        </IndexCard>
        <Action>
          <TradeIcon />
          交易
        </Action>
        <Action>
          <PostIcon />
          发帖
        </Action>
        <Action $size={50}>
          <GridIcon />
          功能
        </Action>
        <Action>
          <DotsIcon />
          设自选
        </Action>
      </BottomBar>

      <NavBar>
        <svg width="52" height="52" viewBox="0 0 52 52" fill="none" stroke="#bdbdbd" strokeWidth="4">
          <rect x="4" y="4" width="43" height="43" rx="2" />
        </svg>
        <svg width="52" height="52" viewBox="0 0 52 52" fill="none" stroke="#bdbdbd" strokeWidth="4">
          <circle cx="26" cy="26" r="23" />
        </svg>
        <svg width="52" height="52" viewBox="0 0 52 52" fill="none" stroke="#bdbdbd" strokeWidth="4" strokeLinejoin="round">
          <path d="M46 4v44L6 26z" />
        </svg>
      </NavBar>
    </Page>
  );
};

export default App;
